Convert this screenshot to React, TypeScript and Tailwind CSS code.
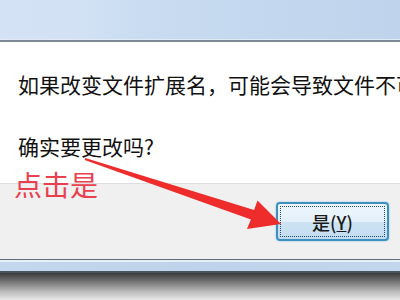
import React from "react";

export default function App() {
  const cjk = { fontFamily: '"Noto Sans CJK SC", "Noto Sans", sans-serif' };
  return (
    <div className="relative w-[400px] h-[300px] overflow-hidden flex flex-col bg-white" style={cjk}>
      {/* title bar */}
      <div className="h-[39px] shrink-0 bg-[linear-gradient(90deg,#d3e3f5_0%,#d2e2f4_20%,#c9dcf1_35%,#c4d8ef_60%,#bfd4ec_100%)]" />
      <div className="h-[1px] shrink-0 bg-[#e2ebf5]" />
      <div className="h-[2px] shrink-0 bg-[#7d8a96]" />
      {/* content */}
      <div className="h-[141px] shrink-0 bg-white pl-[18px] pt-[30px] flex flex-col overflow-hidden">
        <div className="text-[21px] leading-[24px] text-[#111111] whitespace-nowrap">
          如果改变文件扩展名，可能会导致文件不可用。
        </div>
        <div className="mt-[38px] text-[21px] leading-[24px] text-[#111111] whitespace-nowrap">
          确实要更改吗?
        </div>
      </div>
      {/* footer */}
      <div className="h-[76px] shrink-0 bg-[#f0f0f0] border-t border-[#dfdfdf] flex justify-end items-start pt-[18px] pr-[11px]">
        <div className="w-[113px] h-[39px] rounded-[4px] border-2 border-[#3d8fc0] bg-[linear-gradient(180deg,#eef6fc_0%,#e3f0fa_50%,#cde3f3_51%,#c2dcef_100%)] p-[2px] shadow-[0_0_2px_#7fc4ea]">
          <div className="w-full h-full border border-dotted border-[#1d4f6e] flex items-center justify-center text-[18px] leading-none font-medium text-[#1a1a1a]">
            <span>是(<span className="underline">Y</span>)</span>
          </div>
        </div>
      </div>
      {/* bottom frame */}
      <div className="h-[1px] shrink-0 bg-[#5e6c79]" />
      <div className="h-[2px] shrink-0 bg-[#e8eff7]" />
      <div className="h-[9px] shrink-0 bg-[linear-gradient(90deg,#c3d7ee_0%,#bed3eb_50%,#c2d6ee_100%)]" />
      <div className="h-[2px] shrink-0 bg-[#4a545e]" />
      <div className="flex-1 bg-[linear-gradient(180deg,#3a3a3a_0%,#7a7a7a_35%,#bdbdbd_70%,#e6e6e6_100%)]" />

      {/* annotation */}
      <div className="absolute left-[14px] top-[167px] text-[28px] leading-[34px] text-[#e8404e] whitespace-nowrap">
        点击是
      </div>
      <svg className="absolute left-0 top-0" width="400" height="300" viewBox="0 0 400 300">
        <polygon
          points="85.3,158 254.1,209.9 257.5,200.5 281,224 247,229 250.9,219.4 84.7,160"
          fill="#ee2c2c"
        />
      </svg>
    </div>
  );
}
